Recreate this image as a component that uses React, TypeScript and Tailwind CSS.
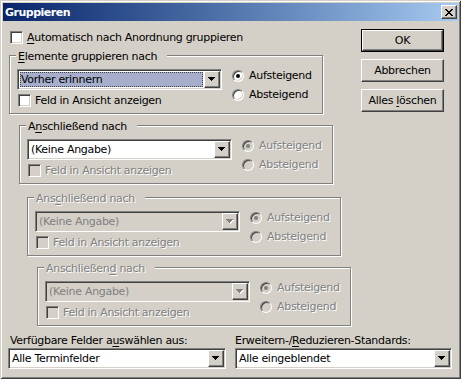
import React from 'react';

const DIS = 'text-[#808080] [text-shadow:1px_1px_0_#fff]';
const SUNKEN =
  'border border-t-[#808080] border-l-[#808080] border-r-white border-b-white shadow-[inset_1px_1px_0_#404040,inset_-1px_-1px_0_#D4D0C8]';
const RAISED =
  'border border-t-white border-l-white border-r-[#404040] border-b-[#404040] shadow-[inset_-1px_-1px_0_#808080]';

const U = ({ children }: { children: React.ReactNode }) => (
  <span className="underline decoration-1 underline-offset-[2px]">{children}</span>
);

const Check = ({ label, disabled }: { label: React.ReactNode; disabled?: boolean }) => (
  <div className="flex items-center gap-[4px] h-[13px]">
    <span className={`block w-[13px] h-[13px] shrink-0 ${SUNKEN} ${disabled ? 'bg-[#D4D0C8]' : 'bg-white'}`} />
    <span className={disabled ? DIS : ''}>{label}</span>
  </div>
);

const Radio = ({ label, checked, disabled }: { label: string; checked?: boolean; disabled?: boolean }) => (
  <div className="flex items-center gap-[5px] h-[13px]">
    <span
      className={`flex items-center justify-center w-[12px] h-[12px] shrink-0 rounded-full ${SUNKEN} ${
        disabled ? 'bg-[#D4D0C8]' : 'bg-white'
      }`}
    >
      {checked && <span className={`block w-[4px] h-[4px] rounded-full ${disabled ? 'bg-[#808080]' : 'bg-black'}`} />}
    </span>
    <span className={disabled ? DIS : ''}>{label}</span>
  </div>
);

const Arrow = ({ disabled }: { disabled?: boolean }) => {
  const d = 'M0 0h7v1h-7zM1 1h5v1h-5zM2 2h3v1h-3zM3 3h1v1h-1z';
  return (
    <svg width="8" height="5" viewBox="0 0 8 5">
      {disabled && <path d={d} fill="#fff" transform="translate(1 1)" />}
      <path d={d} fill={disabled ? '#808080' : '#000'} />
    </svg>
  );
};

const Combo = ({
  value,
  className,
  selected,
  disabled,
}: {
  value: string;
  className: string;
  selected?: boolean;
  disabled?: boolean;
}) => (
  <div className={`flex h-[21px] p-[1px] ${SUNKEN} ${disabled ? 'bg-[#D4D0C8]' : 'bg-white'} ${className}`}>
    <div className="flex flex-1 min-w-0 p-[1px]">
      <div
        className={`flex flex-1 items-center pl-[1px] ${
          selected ? 'bg-[#A6AECB] outline-1 outline-dotted outline-[#404040] -outline-offset-1' : ''
        } ${disabled ? 'text-[#808080]' : 'text-black'}`}
      >
        <span>{value}</span>
      </div>
    </div>
    <div className={`flex w-[16px] items-center justify-center bg-[#D4D0C8] ${RAISED}`}>
      <Arrow disabled={disabled} />
    </div>
  </div>
);

const Group = ({
  legend,
  className,
  disabled,
}: {
  legend: React.ReactNode;
  className: string;
  disabled?: boolean;
}) => (
  <div
    className={`w-[314px] h-[59px] border border-[#808080] shadow-[inset_1px_1px_0_#fff,1px_1px_0_#fff] ${className}`}
  >
    <div className={`-mt-[6px] ml-[6px] w-fit pl-[2px] pr-[10px] bg-[#D4D0C8] ${legend && disabled ? DIS : ''}`}>
      {legend}
    </div>
    <div className="flex mt-[6px] pl-[7px]">
      <div className="flex flex-col">
        <Combo
          value={disabled === undefined ? 'Vorher erinnern' : '(Keine Angabe)'}
          selected={disabled === undefined}
          disabled={disabled}
          className="w-[205px]"
        />
        <div className="mt-[4px] ml-[1px]">
          <Check label="Feld in Ansicht anzeigen" disabled={disabled !== undefined} />
        </div>
      </div>
      <div className="flex flex-col gap-[6px] ml-[10px]">
        <Radio label="Aufsteigend" checked disabled={disabled !== undefined} />
        <Radio label="Absteigend" disabled={disabled !== undefined} />
      </div>
    </div>
  </div>
);

const Button = ({ children, primary }: { children: React.ReactNode; primary?: boolean }) => (
  <div className={`w-[83px] h-[23px] ${primary ? 'border border-black' : ''}`}>
    <div className={`flex h-full w-full items-center justify-center ${RAISED}`}>
      <span>{children}</span>
    </div>
  </div>
);

export default function App() {
  return (
    <div className="w-[461px] h-[379px] p-[3px] flex flex-col bg-[#D4D0C8] text-black font-['DejaVu_Sans',sans-serif] text-[11px] leading-[13px] tracking-[-0.3px] shadow-[inset_1px_1px_0_#D4D0C8,inset_-1px_-1px_0_#404040,inset_2px_2px_0_#fff,inset_-2px_-2px_0_#808080]">
      <div className="flex h-[18px] items-center justify-between pl-[2px] pr-[1px] bg-linear-to-r from-[#0A246A] to-[#A6CAF0]">
        <span className="font-bold text-white tracking-[-0.5px]">Gruppieren</span>
        <div className={`flex w-[16px] h-[14px] items-center justify-center bg-[#D4D0C8] ${RAISED}`}>
          <svg width="8" height="7" viewBox="0 0 8 7">
            <path
              d="M0 0h2v1h-2zM6 0h2v1h-2zM1 1h2v1h-2zM5 1h2v1h-2zM2 2h4v1h-4zM3 3h2v1h-2zM2 4h4v1h-4zM1 5h2v1h-2zM5 5h2v1h-2zM0 6h2v1h-2zM6 6h2v1h-2z"
              fill="#000"
            />
          </svg>
        </div>
      </div>

      <div className="flex">
        <div className="flex flex-col pl-[6px] pt-[10px]">
          <div className="ml-[1px]">
            <Check
              label={
                <>
                  <U>A</U>utomatisch nach Anordnung gruppieren
                </>
              }
            />
          </div>
          <Group
            className="mt-[11px]"
            legend={
              <>
                <U>E</U>lemente gruppieren nach
              </>
            }
          />
          <Group
            className="mt-[11px] ml-[10px]"
            disabled={false}
            legend={
              <>
                A<U>n</U>schließend nach
              </>
            }
          />
          <Group
            className="mt-[13px] ml-[18px]"
            disabled
            legend={
              <>
                Ans<U>c</U>hließend nach
              </>
            }
          />
          <Group
            className="mt-[11px] ml-[28px]"
            disabled
            legend={
              <>
                Anschließen<U>d</U> nach
              </>
            }
          />
        </div>
        <div className="flex flex-col gap-[7px] ml-[10px] pt-[8px]">
          <Button primary>OK</Button>
          <Button>Abbrechen</Button>
          <Button>
            Alles <U>l</U>öschen
          </Button>
        </div>
      </div>

      <div className="flex gap-[9px] pl-[5px] mt-[8px]">
        <div className="flex flex-col gap-[1px]">
          <span className="ml-[2px]">
            Verfügbare Felder a<U>u</U>swählen aus:
          </span>
          <Combo value="Alle Terminfelder" className="w-[218px]" />
        </div>
        <div className="flex flex-col gap-[1px]">
          <span>
            Erweitern-/<U>R</U>eduzieren-Standards:
          </span>
          <Combo value="Alle eingeblendet" className="w-[217px]" />
        </div>
      </div>
    </div>
  );
}
